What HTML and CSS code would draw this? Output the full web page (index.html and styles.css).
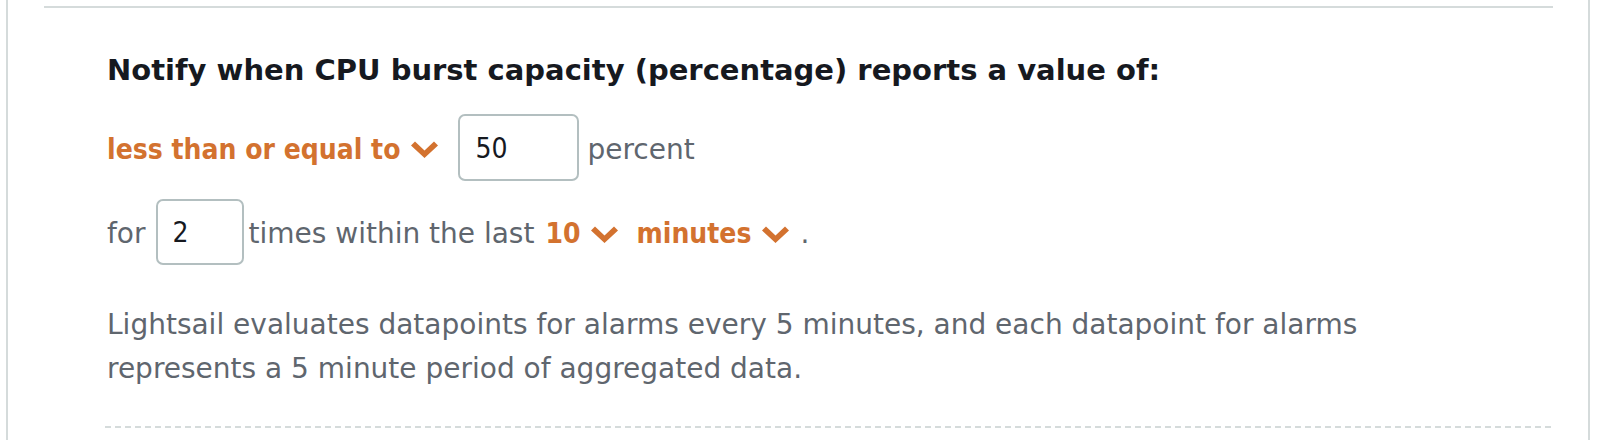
FILE: index.html
```html
<!DOCTYPE html>
<html lang="en">
<head>
<meta charset="utf-8">
<title>Alarm threshold</title>
<link rel="stylesheet" href="styles.css">
</head>
<body>
<div class="panel">
  <div class="rule-top"></div>
  <div class="content">
    <h2 class="title">Notify when CPU burst capacity (percentage) reports a value of:</h2>
    <div class="row row-first">
      <span class="dropdown dd-op">less than or equal to<svg class="chev" viewBox="0 0 27 17" aria-hidden="true"><polygon points="0,4.5 4,0.5 13.5,9.5 23,0.5 27,4.5 13.5,17"/></svg></span>
      <span class="field field-wide">50</span>
      <span class="text text-after">percent</span>
    </div>
    <div class="row row-second">
      <span class="text">for</span>
      <span class="field field-narrow">2</span>
      <span class="text text-times">times within the last</span>
      <span class="dropdown dd-num">10<svg class="chev" viewBox="0 0 27 17" aria-hidden="true"><polygon points="0,4.5 4,0.5 13.5,9.5 23,0.5 27,4.5 13.5,17"/></svg></span>
      <span class="dropdown dd-unit">minutes<svg class="chev" viewBox="0 0 27 17" aria-hidden="true"><polygon points="0,4.5 4,0.5 13.5,9.5 23,0.5 27,4.5 13.5,17"/></svg></span>
      <span class="text text-dot">.</span>
    </div>
    <p class="note">Lightsail evaluates datapoints for alarms every 5 minutes, and each datapoint for alarms<br>represents a 5 minute period of aggregated data.</p>
    <div class="rule-dashed"></div>
  </div>
</div>
</body>
</html>
```
FILE: styles.css
```css
html, body {
  margin: 0;
  padding: 0;
  background: #ffffff;
}
body {
  font-family: "DejaVu Sans", sans-serif;
  color: #5f666e;
  height: 440px;
  overflow: hidden;
}
.panel {
  margin-left: 6px;
  width: 1584px;
  box-sizing: border-box;
  height: 440px;
  border-left: 2px solid #d5dbdb;
  border-right: 2px solid #d5dbdb;
  padding-top: 6px;
}
.rule-top {
  height: 2px;
  background: #d5dbdb;
  margin: 0 35px 0 36px;
}
.content {
  padding-left: 97px;
  padding-right: 35px;
}
.title {
  margin: 0;
  padding-top: 44px;
  padding-left: 2px;
  font-family: "DejaVu Sans", sans-serif;
  font-size: 29px;
  line-height: 36px;
  font-weight: bold;
  color: #16191f;
}
.row {
  display: flex;
  align-items: center;
  font-size: 28px;
  line-height: 34px;
  padding-left: 2px;
}
.row-first {
  margin-top: 26px;
}
.row-second {
  margin-top: 18px;
}
.text,
.dropdown {
  padding-top: 4px;
}
.dropdown {
  display: inline-flex;
  align-items: center;
  color: #d3722f;
  font-family: "DejaVu Sans Condensed", "DejaVu Sans", sans-serif;
  font-weight: bold;
}
.chev {
  width: 27px;
  height: 17px;
  fill: #d3722f;
  margin-left: 10px;
}
.dd-op .chev {
  margin-left: 11px;
}
.field {
  display: inline-flex;
  align-items: center;
  box-sizing: border-box;
  border: 2px solid #b3bfc0;
  border-radius: 7px;
  color: #16191f;
  font-family: "DejaVu Sans Condensed", "DejaVu Sans", sans-serif;
  padding-left: 15px;
  padding-top: 2px;
}
.field-wide {
  width: 121px;
  height: 67px;
  margin-left: 20px;
}
.field-narrow {
  width: 88px;
  height: 66px;
  margin-left: 10px;
}
.text-after {
  margin-left: 8px;
}
.text-times {
  margin-left: 5px;
}
.dd-num {
  margin-left: 11px;
}
.dd-unit {
  margin-left: 19px;
}
.dd-unit .chev {
  margin-left: 11px;
}
.text-dot {
  margin-left: 11px;
}
.note {
  margin: 38px 0 0 0;
  padding-left: 2px;
  font-size: 28px;
  line-height: 44px;
  color: #5f666e;
}
.rule-dashed {
  margin-top: 35px;
  height: 2px;
  background: repeating-linear-gradient(to right, #d5dbdb 0 6px, transparent 6px 10px);
}
```
